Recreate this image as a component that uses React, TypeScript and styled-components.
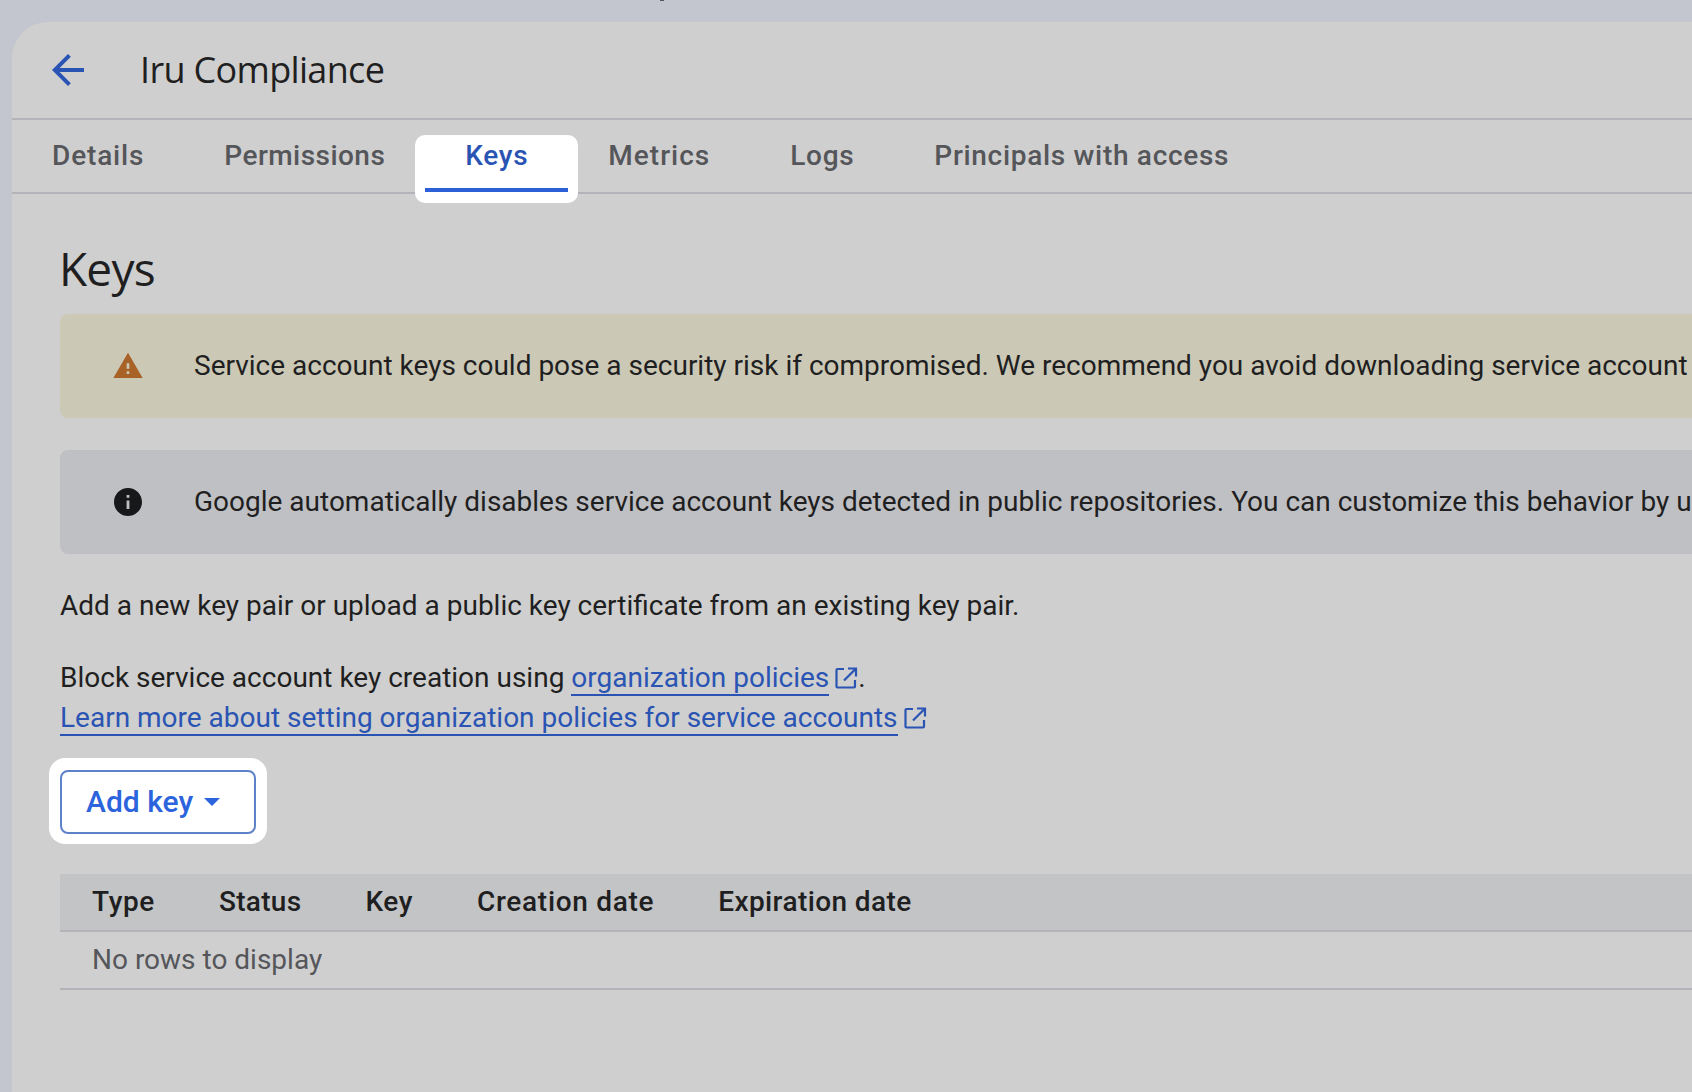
import React from "react";
import styled, { createGlobalStyle } from "styled-components";

const Global = createGlobalStyle`
  html, body { margin: 0; padding: 0; background: #c3c6cf; }
  body { font-family: Roboto, "Liberation Sans", sans-serif; }
`;

const Page = styled.div`
  width: 1692px;
  height: 1092px;
  padding: 22px 0 0 12px;
  box-sizing: border-box;
  overflow: hidden;
  background: #c3c6cf;
  position: relative;
`;

const TopSpeck = styled.span`
  position: absolute;
  left: 660px;
  top: 0;
  width: 4px;
  height: 1px;
  background: #55565a;
`;

const Card = styled.main`
  width: 1680px;
  height: 1070px;
  background: #cfcfcf;
  border-top-left-radius: 36px;
  overflow: hidden;
`;

const Header = styled.header`
  height: 98px;
  box-sizing: border-box;
  display: flex;
  align-items: center;
  padding: 0 0 0 32px;
  border-bottom: 2px solid #b3b3b9;
  gap: 48px;
`;

const BackIcon = styled.svg`
  width: 48px;
  height: 48px;
  flex: none;
`;

const Title = styled.h1`
  margin: -2px 0 0;
  font-family: "Open Sans", sans-serif;
  font-size: 36px;
  font-weight: 400;
  color: #1f1f21;
  letter-spacing: -0.67px;
`;

const Tabs = styled.nav`
  height: 74px;
  box-sizing: border-box;
  display: flex;
  border-bottom: 2px solid #b3b3b9;
  align-items: flex-start;
`;

const Tab = styled.div<{ $active?: boolean; $spacing?: number }>`
  position: relative;
  height: 72px;
  display: flex;
  align-items: flex-start;
  padding: 19px 40px 0;
  box-sizing: border-box;
  font-family: Roboto, sans-serif;
  font-size: 28px;
  font-weight: 500;
  line-height: 34px;
  letter-spacing: ${(p) => p.$spacing ?? 0.7}px;
  color: ${(p) => (p.$active ? "#2a54b3" : "#55565a")};
  z-index: ${(p) => (p.$active ? 1 : 0)};
`;

const TabHighlight = styled.span`
  position: absolute;
  left: -10px;
  right: -10px;
  top: 15px;
  height: 68px;
  background: #fff;
  border-radius: 10px;
  z-index: -1;
`;

const TabUnderline = styled.span`
  position: absolute;
  left: 0;
  right: 0;
  top: 68px;
  height: 4px;
  background: #2b60d9;
`;

const Content = styled.section`
  padding: 0 0 0 48px;
`;

const Heading = styled.h2`
  margin: 0 0 0 -1px;
  padding-top: 46px;
  font-family: "Open Sans", sans-serif;
  font-size: 46px;
  line-height: 56px;
  font-weight: 400;
  color: #1f1f21;
  letter-spacing: -0.8px;
`;

const Banner = styled.div<{ $tone: "warn" | "info" }>`
  height: 104px;
  box-sizing: border-box;
  margin-top: ${(p) => (p.$tone === "warn" ? "18px" : "32px")};
  display: flex;
  align-items: center;
  background: ${(p) => (p.$tone === "warn" ? "#cbc8b6" : "#bfc0c4")};
  border-radius: 8px 0 0 8px;
  padding-left: 52px;
  gap: 50px;
  font-size: 28px;
  color: #1f1f21;
  white-space: nowrap;
`;

const BannerIcon = styled.svg`
  width: 32px;
  height: 32px;
  flex: none;
`;

const BannerText = styled.span`
  margin-top: -2px;
`;

const Para = styled.p<{ $top: number }>`
  margin: ${(p) => p.$top}px 0 0;
  font-size: 28px;
  line-height: 40px;
  color: #1f1f21;
  white-space: nowrap;
`;

const Link = styled.a`
  color: #2a54b3;
  text-decoration: none;
  border-bottom: 2px solid #2a54b3;
`;

const ExtIcon = styled.svg`
  width: 24px;
  height: 24px;
  margin-left: 5px;
  vertical-align: -3px;
`;

const ButtonHalo = styled.div`
  margin: 20px 0 0 -11px;
  width: 218px;
  height: 86px;
  box-sizing: border-box;
  padding: 12px 11px;
  background: #fff;
  border-radius: 16px;
`;

const Button = styled.button`
  width: 196px;
  height: 64px;
  box-sizing: border-box;
  padding: 0 0 2px 24px;
  display: flex;
  align-items: center;
  gap: 11px;
  background: #fff;
  border: 2px solid #5e82c9;
  border-radius: 8px;
  color: #2b64dc;
  font-family: Roboto, sans-serif;
  font-size: 30px;
  font-weight: 500;
`;

const Caret = styled.span`
  width: 0;
  height: 0;
  margin-top: 2px;
  border-left: 8px solid transparent;
  border-right: 8px solid transparent;
  border-top: 8px solid #2b64dc;
`;

const Table = styled.div`
  margin-top: 30px;
`;

const HeadRow = styled.div`
  height: 58px;
  box-sizing: border-box;
  display: flex;
  align-items: center;
  padding-bottom: 2px;
  background: #c3c4c6;
  border-bottom: 2px solid #b3b3b9;
`;

const HeadCell = styled.div<{ $spacing: number }>`
  padding: 0 32px;
  font-size: 28px;
  font-weight: 500;
  letter-spacing: ${(p) => p.$spacing}px;
  color: #1f1f21;
  white-space: nowrap;
`;

const EmptyRow = styled.div`
  height: 58px;
  box-sizing: border-box;
  display: flex;
  align-items: center;
  padding: 0 0 2px 32px;
  border-bottom: 2px solid #b3b3b9;
  font-size: 28px;
  color: #55565a;
`;

const External = () => (
  <ExtIcon viewBox="0 0 24 24" fill="none" stroke="#2a54b3" strokeWidth="2.2">
    <path d="M10 3H3.5a1 1 0 0 0-1 1v16.5a1 1 0 0 0 1 1H20a1 1 0 0 0 1-1V14" />
    <path d="M10 14.5 21.5 3M14 2.5h8v8" />
  </ExtIcon>
);

export default function App() {
  return (
    <Page>
      <Global />
      <TopSpeck />
      <Card>
        <Header>
          <BackIcon viewBox="0 0 24 24" fill="#2a54b3">
            <path d="M20 11H7.83l5.59-5.59L12 4l-8 8 8 8 1.41-1.41L7.83 13H20v-2z" />
          </BackIcon>
          <Title>Iru Compliance</Title>
        </Header>
        <Tabs>
          <Tab $spacing={0.85}>Details</Tab>
          <Tab $spacing={0.45}>Permissions</Tab>
          <Tab $active>
            <TabHighlight />
            Keys
            <TabUnderline />
          </Tab>
          <Tab $spacing={1}>Metrics</Tab>
          <Tab>Logs</Tab>
          <Tab>Principals with access</Tab>
        </Tabs>
        <Content>
          <Heading>Keys</Heading>
          <Banner $tone="warn">
            <BannerIcon viewBox="0 0 24 24" fill="#a86226">
              <path d="M1 21h22L12 2 1 21zm12-3h-2v-2h2v2zm0-4h-2v-4h2v4z" />
            </BannerIcon>
            <BannerText>
              Service account keys could pose a security risk if compromised. We recommend you avoid downloading service account keys and instead use Workload Identity Federation.
            </BannerText>
          </Banner>
          <Banner $tone="info">
            <BannerIcon viewBox="0.57 0.57 22.86 22.86" fill="#17181a">
              <path d="M12 2C6.48 2 2 6.48 2 12s4.48 10 10 10 10-4.48 10-10S17.52 2 12 2zm1 15h-2v-6h2v6zm0-8h-2V7h2v2z" />
            </BannerIcon>
            <BannerText>
              Google automatically disables service account keys detected in public repositories. You can customize this behavior by using the organization policy.
            </BannerText>
          </Banner>
          <Para $top={32}>Add a new key pair or upload a public key certificate from an existing key pair.</Para>
          <Para $top={32}>
            Block service account key creation using <Link>organization policies</Link>
            <External />.
          </Para>
          <Para $top={0}>
            <Link>Learn more about setting organization policies for service accounts</Link>
            <External />
          </Para>
          <ButtonHalo>
            <Button>
              Add key
              <Caret />
            </Button>
          </ButtonHalo>
          <Table>
            <HeadRow>
              <HeadCell $spacing={0.6}>Type</HeadCell>
              <HeadCell $spacing={0.3}>Status</HeadCell>
              <HeadCell $spacing={0.6}>Key</HeadCell>
              <HeadCell $spacing={0.7}>Creation date</HeadCell>
              <HeadCell $spacing={0.4}>Expiration date</HeadCell>
            </HeadRow>
            <EmptyRow>No rows to display</EmptyRow>
          </Table>
        </Content>
      </Card>
    </Page>
  );
}
